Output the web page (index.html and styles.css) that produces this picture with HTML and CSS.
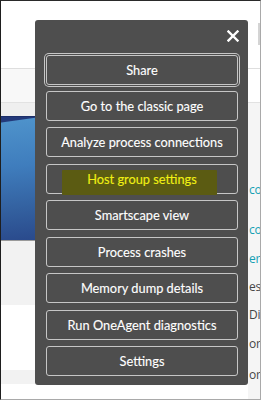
FILE: index.html
```html
<!DOCTYPE html>
<html>
<head>
<meta charset="utf-8">
<link rel="stylesheet" href="styles.css">
</head>
<body>
<div class="page">
  <div class="col-left">
    <div class="l-top"></div>
    <div class="l-band1"></div>
    <div class="l-band2"></div>
    <div class="l-hero"></div>
    <div class="l-gray"></div>
    <div class="l-white"></div>
    <div class="l-gray2"></div>
  </div>
  <div class="col-mid"></div>
  <div class="col-right">
    <div class="r-top"><div class="r-thumb"></div></div>
    <div class="r-band1"></div>
    <div class="r-list">
      <div class="r-line teal t1">co</div>
      <div class="r-line teal t2">co</div>
      <div class="r-line teal t3">er</div>
      <div class="r-line dark t4">es</div>
      <div class="r-line dark t5">Di</div>
      <div class="r-line dark t6">or</div>
      <div class="r-line dark t7">or</div>
    </div>
  </div>

  <div class="menu">
    <button class="close" aria-label="Close">
      <svg width="12" height="12" viewBox="0 0 12 12"><path d="M1.5 1.5 L10.5 10.5 M10.5 1.5 L1.5 10.5" stroke="#ffffff" stroke-width="2.4" stroke-linecap="square" fill="none"/></svg>
    </button>
    <button class="item focused"><span>Share</span></button>
    <button class="item"><span>Go to the classic page</span></button>
    <button class="item"><span>Analyze process connections</span></button>
    <button class="item marked"><span>Host group settings</span></button>
    <button class="item"><span>Smartscape view</span></button>
    <button class="item"><span>Process crashes</span></button>
    <button class="item"><span>Memory dump details</span></button>
    <button class="item"><span>Run OneAgent diagnostics</span></button>
    <button class="item"><span>Settings</span></button>
  </div>
</div>
</body>
</html>
```

FILE: styles.css
```css
html, body {
  margin: 0;
  padding: 0;
  background: #ffffff;
}

.page {
  position: relative;
  box-sizing: border-box;
  width: 261px;
  height: 400px;
  border-left: 1px solid #1e1e1e;
  border-top: 1px solid #2a2a2a;
  border-right: 1px solid #a9a9a9;
  border-bottom: 1px solid #a9a9a9;
  display: grid;
  grid-template-columns: 34px 1fr 12px;
  overflow: hidden;
  font-family: "Open Sans", "Noto Sans", sans-serif;
}

/* left column */
.col-left {
  display: flex;
  flex-direction: column;
}
.l-top {
  height: 67px;
  background: #ffffff;
  border-bottom: 1px solid #dedede;
}
.l-band1 {
  height: 33px;
  background: #f8f8f8;
  border-bottom: 1px solid #e2e2e2;
}
.l-band2 {
  height: 13px;
  background: #efefef;
}
.l-hero {
  height: 123px;
  border-top: 1px solid #1c2f6a;
  border-bottom: 1px solid #9a9a9a;
  background:
    linear-gradient(172deg, #23397a 0, #23397a 5px, rgba(35,57,122,0) 6px),
    linear-gradient(175deg, #4f94cc 0%, #3f7dbd 40%, #33609f 75%, #2a4a8c 100%);
}
.l-gray {
  height: 64px;
  background: #f2f2f2;
}
.l-white {
  height: 65px;
  background: #ffffff;
}
.l-gray2 {
  height: 14px;
  background: #f2f2f2;
}

.col-mid {
  background: #ffffff;
}

/* right column */
.col-right {
  display: flex;
  flex-direction: column;
  min-width: 0;
}
.r-top {
  background: #ffffff;
  border-bottom: 1px solid #dedede;
  display: flex;
  justify-content: flex-end;
  padding-top: 22px;
  box-sizing: border-box;
  height: 68px;
}
.r-thumb {
  width: 2px;
  height: 22px;
  background: #d4d4d4;
}
.r-band1 {
  height: 33px;
  background: #ffffff;
  border-bottom: 1px solid #e2e2e2;
}
.r-list {
  flex: 1;
  background: #f5f5f5;
  display: flex;
  flex-direction: column;
  overflow: hidden;
  padding-left: 1px;
}
.r-line {
  font-size: 12px;
  line-height: 14px;
  height: 14px;
  white-space: nowrap;
  letter-spacing: -0.3px;
}
.teal { color: #13a0b4; }
.dark { color: #454646; }
.t1 { margin-top: 80px; }
.t2 { margin-top: 26px; }
.t3 { margin-top: 15px; }
.t4 { margin-top: 14px; }
.t5 { margin-top: 14px; }
.t6 { margin-top: 15px; }
.t7 { margin-top: 17px; }

/* overlay menu */
.menu {
  position: absolute;
  left: 34px;
  top: 19px;
  width: 213px;
  height: 365px;
  box-sizing: border-box;
  padding: 34.6px 10px 9px 11px;
  background: #4e4e4e;
  border-radius: 3px;
  display: flex;
  flex-direction: column;
  gap: 6.43px;
}
.close {
  position: absolute;
  top: 10px;
  right: 9px;
  width: 12px;
  height: 12px;
  padding: 0;
  border: 0;
  background: none;
  display: flex;
}
.item {
  position: relative;
  height: 30px;
  flex: none;
  box-sizing: border-box;
  border: 1px solid #c6c6c6;
  border-radius: 3px;
  background: #4e4e4e;
  color: #ffffff;
  font-family: "Lato", "Open Sans", sans-serif;
  font-size: 12.8px;
  -webkit-text-stroke: 0.12px currentColor;
  padding: 0;
  margin: 0;
  text-align: center;
}
.item span {
  position: relative;
  z-index: 1;
}
.focused {
  box-shadow: 0 0 0 1px #4e4e4e, 0 0 0 2px #c6c6c6;
}
.marked {
  color: #f0f012;
}
.marked::before {
  content: "";
  position: absolute;
  left: 15px;
  top: 5px;
  width: 155px;
  height: 25px;
  background: #5b5b12;
  border-radius: 1px;
}
```
